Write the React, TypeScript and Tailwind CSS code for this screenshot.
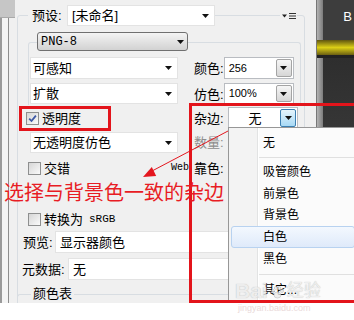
import React from "react";

function Tri() {
  return (
    <svg width="7" height="4" viewBox="0 0 7 4" className="shrink-0">
      <path d="M0 0H7L3.5 4Z" fill="#111" />
    </svg>
  );
}

function Check({ on = false }: { on?: boolean }) {
  return (
    <span className="w-[13px] h-[13px] shrink-0 border border-[#8e8f8f] bg-[linear-gradient(135deg,#d6d6d6,#fafafa)] flex items-center justify-center">
      {on && (
        <svg width="9" height="9" viewBox="0 0 9 9">
          <path d="M1.2 4.6l2.3 2.4L7.9 1.6" fill="none" stroke="#3d58a5" strokeWidth="1.8" />
        </svg>
      )}
    </span>
  );
}

function Select({ w, text, pl = "pl-[2px]" }: { w: string; text: string; pl?: string }) {
  return (
    <div className={`${w} h-full flex items-center justify-between bg-white border border-[#e3e3e3] ${pl} pr-[5px]`}>
      <span className="text-[13px] leading-none">{text}</span>
      <Tri />
    </div>
  );
}

function Combo({ value, hot = false, center = false }: { value: string; hot?: boolean; center?: boolean }) {
  return (
    <div className="w-[70px] h-full flex bg-white border border-[#b9bcc1] p-px">
      <span
        className={`flex-1 flex items-center ${
          center ? "justify-center text-[13px]" : "pl-[3px] text-[11px]"
        } leading-none`}
      >
        {value}
      </span>
      <span
        className={`w-[16px] h-full flex items-center justify-center rounded-[2px] border ${
          hot
            ? "border-[#3c7fb1] bg-gradient-to-b from-[#e5f4fc] to-[#a7d9f5]"
            : "border-[#a4a4a4] bg-gradient-to-b from-[#f6f6f6] to-[#d6d6d6]"
        }`}
      >
        <Tri />
      </span>
    </div>
  );
}

function Label({ text, gray = false }: { text: string; gray?: boolean }) {
  return (
    <span className={`w-[34px] shrink-0 text-[13px] leading-none ${gray ? "text-[#8d8d8d]" : ""}`}>{text}</span>
  );
}

function MenuItem({ text, hot = false, h = "h-[21px]" }: { text: string; hot?: boolean; h?: string }) {
  if (hot)
    return (
      <div className={`${h} mx-[2px] flex items-center pl-[31px] rounded-[3px] border border-[#b8d2f0] bg-gradient-to-b from-[#f3f8fe] to-[#dfeafa]`}>
        {text}
      </div>
    );
  return <div className={`${h} flex items-center pl-[34px]`}>{text}</div>;
}

function Sep({ h }: { h: string }) {
  return (
    <div className={`${h} flex items-center`}>
      <div className="ml-[30px] flex-1 h-px bg-[#e0e0e0]" />
    </div>
  );
}

export default function App() {
  return (
    <div className="relative w-[354px] h-[320px] overflow-hidden bg-white text-black font-['Liberation_Sans','Noto_Sans_CJK_SC',sans-serif]">
      <div className="flex h-[303px]">
        {/* left docked panel edge */}
        <div className="w-[15px] flex flex-col">
          <div className="h-[18px] bg-[#c6c6c6] border-b border-[#a9a9a9]" />
          <div className="flex-1 flex">
            <div className="w-[2px] bg-[#9a9a9a]" />
            <div className="w-[6px] bg-[#f4f4f4]" />
            <div className="w-px bg-[#8e8e8e]" />
            <div className="flex-1 bg-[#f0f0f0]" />
          </div>
        </div>

        {/* settings panel */}
        <div className="w-[302px] bg-[#f0f0f0] border-r border-[#777] pl-[2px] overflow-hidden">
          <div className="mt-[15px] w-[288px] h-[300px] border border-[#d8dde2] rounded-[3px]">
            {/* preset row */}
            <div className="-mt-[11px] h-[21px] flex items-center">
              <span className="ml-[10px] w-[39px] pl-[4px] bg-[#f0f0f0] text-[13px] leading-none">预设:</span>
              <div className="w-[148px] h-full flex items-center justify-between bg-white border border-[#e3e3e3] pl-[4px] pr-[5px]">
                <span className="text-[13px] leading-none">[未命名]</span>
                <Tri />
              </div>
              <span className="ml-[65px] w-[17px] h-full bg-[#f0f0f0] flex items-center justify-center">
                <svg width="14" height="8" viewBox="0 0 14 8">
                  <path d="M0 2.5H5L2.5 5.5Z" fill="#222" />
                  <path d="M7 1.5H14M7 4H14M7 6.5H14" stroke="#333" strokeWidth="1" />
                </svg>
              </span>
            </div>

            {/* format group */}
            <div className="mt-[16px] ml-[10px] w-[273px] border-t border-l border-r border-[#d8dde2] rounded-t-[3px] pb-px">
              <div className="-mt-[11px] ml-[8px] w-[151px] h-[19px] flex items-center justify-between rounded-[3px] border border-[#707070] bg-gradient-to-b from-[#f4f4f4] to-[#d2d2d2] pl-[3px] pr-[3px]">
                <span className="font-['Liberation_Mono',monospace] text-[12px] leading-none">PNG-8</span>
                <Tri />
              </div>
              <div className="mt-[6px] h-[22px] flex items-center">
                <div className="ml-px h-full flex">
                  <Select w="w-[148px]" text="可感知" />
                </div>
                <span className="ml-[16px]">
                  <Label text="颜色:" />
                </span>
                <Combo value="256" />
              </div>
              <div className="mt-[4px] h-[21px] flex items-center">
                <div className="ml-px h-full flex">
                  <Select w="w-[148px]" text="扩散" />
                </div>
                <span className="ml-[16px]">
                  <Label text="仿色:" />
                </span>
                <Combo value="100%" />
              </div>
            </div>

            <div className="mt-[2px] h-[22px] flex items-center">
              <div className="w-[176px] flex items-center pl-[8px] gap-[3px]">
                <Check on />
                <span className="text-[13px] leading-none">透明度</span>
              </div>
              <Label text="杂边:" />
              <Combo value="无" hot center />
            </div>

            <div className="mt-[3px] h-[21px] flex items-center">
              <div className="w-[176px] h-full flex pl-[12px]">
                <Select w="w-[148px]" text="无透明度仿色" />
              </div>
              <Label text="数量:" gray />
            </div>

            <div className="mt-[6px] h-[18px] flex items-center">
              <div className="w-[153px] flex items-center pl-[10px] gap-[3px]">
                <Check />
                <span className="text-[13px] leading-none">交错</span>
              </div>
              <span className="w-[23px] font-['Liberation_Mono',monospace] text-[10px] leading-none">Web</span>
              <Label text="靠色:" />
            </div>

            <div className="mt-[34px] h-[16px] flex items-center pl-[10px] gap-[3px]">
              <Check />
              <span className="text-[13px] leading-none">转换为</span>
              <span className="ml-[3px] font-['Liberation_Mono',monospace] text-[11px] leading-none">sRGB</span>
            </div>

            <div className="mt-[4px] h-[22px] flex items-center pl-[5px]">
              <span className="w-[32px] text-[13px] leading-none">预览:</span>
              <Select w="w-[245px]" text="显示器颜色" pl="pl-[4px]" />
            </div>

            <div className="mt-[5px] h-[22px] flex items-center pl-[4px]">
              <span className="w-[46px] text-[13px] leading-none">元数据:</span>
              <Select w="w-[232px]" text="无" pl="pl-[4px]" />
            </div>

            <div className="mt-[14px] -ml-px h-[20px] border-t border-l border-[#d8dde2] rounded-tl-[3px]">
              <div className="-mt-[9px] ml-[13px] w-fit px-[2px] bg-[#f0f0f0] text-[13px] leading-[16px]">颜色表</div>
            </div>
          </div>
        </div>

        {/* dark side panel */}
        <div className="flex-1 flex flex-col">
          <div className="h-[40px] flex">
            <div className="w-[6px] bg-gradient-to-r from-[#b4b4b4] to-[#7c7c7c]" />
            <div className="flex-1 bg-[#3d3d3d] flex justify-end pr-[2px] pt-[10px]">
              <span className="text-white text-[13px] leading-[14px]">B</span>
            </div>
          </div>
          <div className="h-[15px] bg-[linear-gradient(to_bottom,#5f5410,#dccf16_50%,#6b5f12)]" />
          <div className="h-[3px] bg-[#222]" />
          <div className="flex-1 flex">
            <div className="w-[6px] bg-gradient-to-r from-[#b4b4b4] to-[#7c7c7c]" />
            <div className="flex-1 bg-gradient-to-b from-[#2e2e2e] to-[#4a4a4a]" />
          </div>
        </div>
      </div>

      {/* arrow annotation */}
      <svg className="absolute left-0 top-0 pointer-events-none" width="354" height="320" viewBox="0 0 354 320">
        <line x1="228" y1="131" x2="152" y2="171" stroke="#e4161e" strokeWidth="1" />
        <path d="M143 177L156.2 176L151.8 167Z" fill="#e4161e" />
      </svg>

      {/* matte dropdown */}
      <div className="absolute left-[228px] top-[127px] w-[130px] h-[176px] border border-[#979797] pt-[4px] text-[12px] bg-[linear-gradient(to_right,#f3f3f3_28px,#e2e3e3_28px,#e2e3e3_29px,#ffffff_29px,#ffffff_30px,#fbfbfb_30px)]">
        <MenuItem text="无" h="h-[22px]" />
        <Sep h="h-[7px]" />
        <MenuItem text="吸管颜色" h="h-[22px]" />
        <MenuItem text="前景色" />
        <MenuItem text="背景色" />
        <div className="mt-px">
          <MenuItem text="白色" hot h="h-[22px]" />
        </div>
        <MenuItem text="黑色" h="h-[22px]" />
        <Sep h="h-[9px]" />
        <MenuItem text="其它..." h="h-[22px]" />
      </div>

      {/* red highlight boxes */}
      <div className="absolute left-[19px] top-[106px] w-[92px] h-[25px] border-[3px] border-[#e3141b]" />
      <div className="absolute left-[189px] top-[103px] w-[200px] h-[200px] border-[3px] border-[#e3141b]" />

      <div className="absolute left-[4px] top-[181px] text-[20px] leading-[22px] text-[#e81c24] font-['Noto_Sans_CJK_SC',sans-serif]">
        选择与背景色一致的杂边
      </div>

      {/* watermark */}
      <div className="absolute left-[235px] top-[280px] flex items-end gap-[3px] text-[#ececec] opacity-80 [text-shadow:0_0_1px_#a8a8a8] pointer-events-none">
        <span className="text-[21px] leading-[22px] font-bold">Bai</span>
        <svg width="13" height="14" viewBox="0 0 13 14" className="mb-[3px]">
          <g fill="#ececec" stroke="#b0b0b0" strokeWidth="0.6">
            <ellipse cx="6.5" cy="10" rx="3.5" ry="3" />
            <circle cx="2" cy="6" r="1.5" />
            <circle cx="4.8" cy="3" r="1.5" />
            <circle cx="8.2" cy="3" r="1.5" />
            <circle cx="11" cy="6" r="1.5" />
          </g>
        </svg>
        <span className="text-[17px] leading-[22px]">经验</span>
      </div>
      <div className="absolute left-[238px] top-[303px] text-[9px] leading-[10px] text-[#eadada] font-['Liberation_Sans',sans-serif]">
        jingyan.baidu.com
      </div>
    </div>
  );
}
